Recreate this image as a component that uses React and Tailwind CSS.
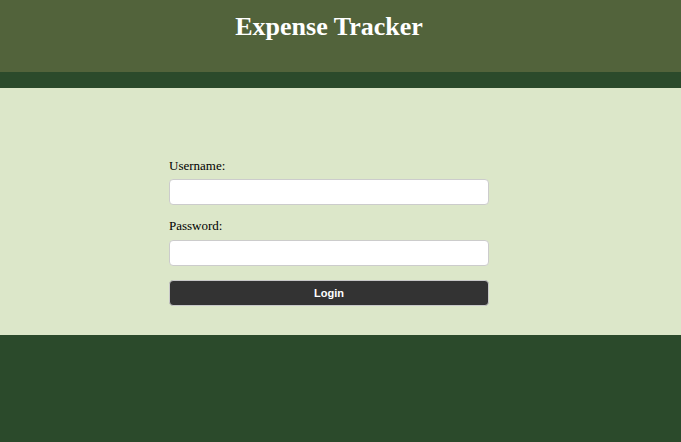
import React, { useState } from "react";

const serif = { fontFamily: '"Liberation Serif", "Times New Roman", serif' };

const App = () => {
  const [username, setUsername] = useState("");
  const [password, setPassword] = useState("");

  const onSubmit = (e) => {
    e.preventDefault();
  };

  return (
    <div className="min-h-screen bg-[#2b4a2b]" style={serif}>
      {/* header */}
      <header className="h-[72px] bg-[#52633b] pt-[14px]">
        <h1 className="w-[658px] text-center text-[26px] font-bold leading-none text-white">
          Expense Tracker
        </h1>
      </header>
      <div className="h-4 bg-[#2b4a2b]" />

      {/* login */}
      <main className="h-[247px] bg-[#dce7c9] pt-[70px]">
        <form onSubmit={onSubmit} className="ml-[169px] flex w-[320px] flex-col">
          <label className="text-[13px] leading-[15px] text-black">
            Username:
          </label>
          <input
            type="text"
            value={username}
            onChange={(e) => setUsername(e.target.value)}
            className="mt-[6px] h-[26px] rounded border border-[#cccccc] bg-white px-2 text-[13px] outline-none"
          />
          <label className="mt-[13px] text-[13px] leading-[15px] text-black">
            Password:
          </label>
          <input
            type="password"
            value={password}
            onChange={(e) => setPassword(e.target.value)}
            className="mt-[7px] h-[26px] rounded border border-[#cccccc] bg-white px-2 text-[13px] outline-none"
          />
          <button
            type="submit"
            className="mt-[14px] h-[26px] rounded border border-[#c8c8c8] bg-[#333333] text-[11px] font-bold text-white"
            style={{ fontFamily: '"Liberation Sans", Arial, sans-serif' }}
          >
            Login
          </button>
        </form>
      </main>
    </div>
  );
};

export default App;
